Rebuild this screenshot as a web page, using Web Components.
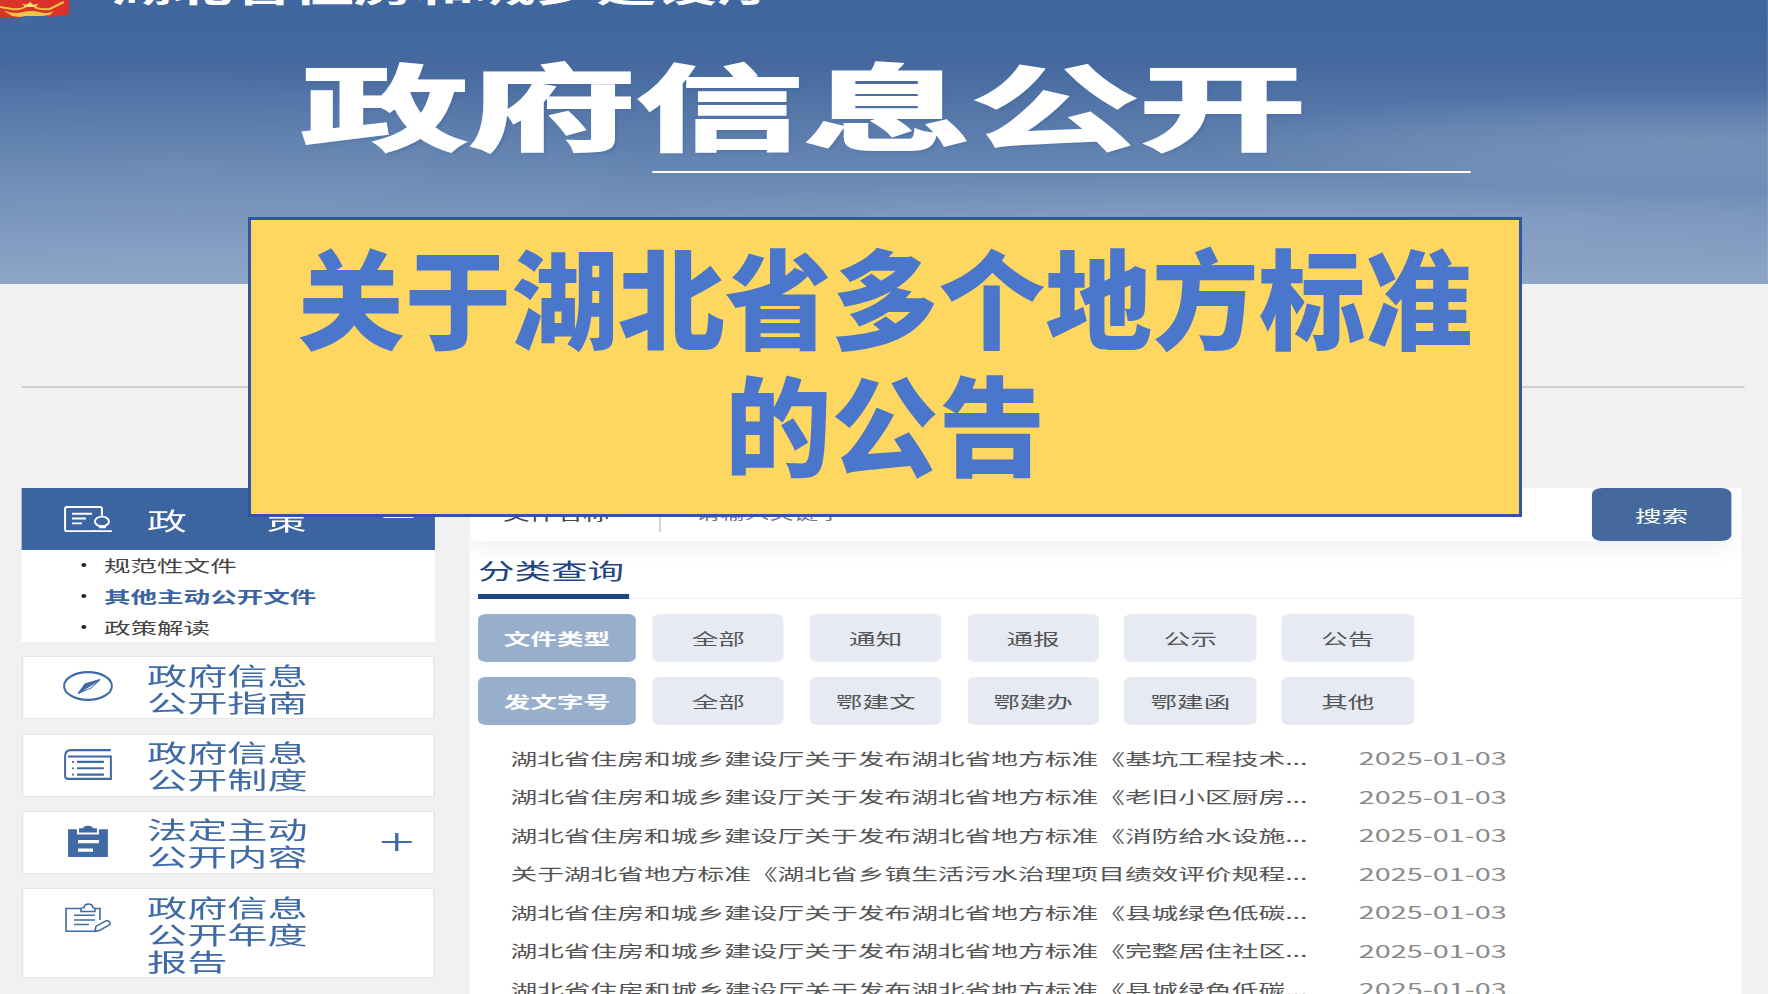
<!DOCTYPE html>
<html lang="zh-CN">
<head>
<meta charset="utf-8">
<title>政府信息公开</title>
<style>
  html, body {
    background: #f1f1f1;
    height: 994px;
    margin: 0;
    overflow: hidden;
    position: relative;
    width: 1768px;
  }
</style>
</head>
<body>
<x-stage>
  <x-banner slot="banner"></x-banner>

  <x-nav-head slot="nav" label="政策">
    <svg slot="icon" viewBox="0 0 50 30" preserveAspectRatio="none" fill="none" stroke="#fff" stroke-width="2">
      <path d="M33 27H4a2 2 0 0 1-2-2V4a2 2 0 0 1 2-2h33a2 2 0 0 1 2 2v7"/>
      <path d="M9 9h20M9 14h14M9 19h10"/>
      <ellipse cx="39" cy="17" rx="7" ry="5"/>
      <path d="M36 23h7M30 27h19"/>
    </svg>
    <x-nav-link>规范性文件</x-nav-link>
    <x-nav-link active>其他主动公开文件</x-nav-link>
    <x-nav-link>政策解读</x-nav-link>
  </x-nav-head>

  <x-nav-item slot="nav" height="63">
    <svg slot="icon" viewBox="0 0 50 30" preserveAspectRatio="none" fill="none" stroke="#3f6aa5" stroke-width="2">
      <ellipse cx="25" cy="15" rx="24" ry="13"/>
      <path d="M37 9 15 22l7-9z" fill="#3f6aa5" stroke-width="1"/>
      <path d="M37 9 15 22l13-5z" fill="#fff" stroke-width="1"/>
    </svg>
    政府信息<br>公开指南
  </x-nav-item>
  <x-nav-item slot="nav" height="63">
    <svg slot="icon" viewBox="0 0 50 30" preserveAspectRatio="none" fill="none" stroke="#3f6aa5" stroke-width="2">
      <path d="M48 2H8C4 2 2 4 2 8v18c0 2 1 3 3 3h43V8H5"/>
      <path d="M14 13h27M14 19h27M14 25h27"/>
      <path d="M9 13h2M9 19h2M9 25h2" stroke-width="1.6"/>
    </svg>
    政府信息<br>公开制度
  </x-nav-item>
  <x-nav-item slot="nav" height="63" plus>
    <svg slot="icon" viewBox="0 0 50 30" preserveAspectRatio="none">
      <path fill="#3f6aa5" d="M5 4h9v5h22V4h9v27H5z"/>
      <path fill="#3f6aa5" d="M16 3h4c1-3 9-3 10 0h4v4H16z"/>
      <path fill="#fff" d="M15 14h21v3H15zM15 22h15v3H15z"/>
    </svg>
    法定主动<br>公开内容
  </x-nav-item>
  <x-nav-item slot="nav" height="90">
    <svg slot="icon" viewBox="0 0 50 34" preserveAspectRatio="none" fill="none" stroke="#3f6aa5" stroke-width="1.6">
      <path d="M18 7H3v24h31M37 19V7H32"/>
      <path d="M18 7c0-1 2-1 3-1 1-5 8-5 9 0 1 0 2 0 2 1v3H18z"/>
      <path d="M11 14h21M11 19h21M11 24h15"/>
      <path d="M32 31l1-5 10-6c2-1 5 2 4 4l-10 6z"/>
    </svg>
    政府信息<br>公开年度<br>报告
  </x-nav-item>

  <x-search-bar slot="main"></x-search-bar>
  <x-tab-title slot="main">分类查询</x-tab-title>
  <x-filter-row slot="main" label="文件类型" items="全部,通知,通报,公示,公告"></x-filter-row>
  <x-filter-row slot="main" label="发文字号" items="全部,鄂建文,鄂建办,鄂建函,其他"></x-filter-row>
  <x-doc-list slot="main">
    <x-doc-row date="2025-01-03">湖北省住房和城乡建设厅关于发布湖北省地方标准《基坑工程技术...</x-doc-row>
    <x-doc-row date="2025-01-03">湖北省住房和城乡建设厅关于发布湖北省地方标准《老旧小区厨房...</x-doc-row>
    <x-doc-row date="2025-01-03">湖北省住房和城乡建设厅关于发布湖北省地方标准《消防给水设施...</x-doc-row>
    <x-doc-row date="2025-01-03">关于湖北省地方标准《湖北省乡镇生活污水治理项目绩效评价规程...</x-doc-row>
    <x-doc-row date="2025-01-03">湖北省住房和城乡建设厅关于发布湖北省地方标准《县城绿色低碳...</x-doc-row>
    <x-doc-row date="2025-01-03">湖北省住房和城乡建设厅关于发布湖北省地方标准《完整居住社区...</x-doc-row>
    <x-doc-row date="2025-01-03">湖北省住房和城乡建设厅关于发布湖北省地方标准《县城绿色低碳...</x-doc-row>
  </x-doc-list>
</x-stage>
<x-headline>关于湖北省多个地方标准<br>的公告</x-headline>

<script>
const FONT = `'Noto Sans CJK SC', 'Noto Sans', sans-serif`;

// Small helper, every element is just a shadow root with some html
class Base extends HTMLElement {
  constructor( html ) {
    super();
    this.attachShadow( {mode: 'open'} );
    this.shadowRoot.innerHTML = html;
  }
}

// The reference is a page stretched sideways, so the whole page is laid out
// at its narrow width and widened here
class XStage extends Base {
  constructor() {
    super( `
      <style>
        :host {
          display: block;
          font-family: ${FONT};
          height: 994px;
          transform: scaleX( 1.66 );
          transform-origin: 0 0;
          width: 1065px;
        }
        .rule {
          background: #cfcfcf;
          height: 2px;
          margin: 102px 14px 0 13px;
        }
        .content {
          display: grid;
          column-gap: 21.4px;
          grid-template-columns: 248.6px 766px;
          margin: 100px 0 0 13px;
        }
        .nav {
          display: flex;
          flex-direction: column;
          gap: 14.3px;
        }
        .main {
          background: #fff;
          height: 506px;
          overflow: hidden;
        }
      </style>
      <slot name="banner"></slot>
      <div class="rule"></div>
      <div class="content">
        <div class="nav"><slot name="nav"></slot></div>
        <div class="main"><slot name="main"></slot></div>
      </div>
    ` );
  }
}

class XBanner extends Base {
  constructor() {
    super( `
      <style>
        :host {
          background:
            radial-gradient( 300px 50px at 96% 50%, #ffffff24 0, #ffffff12 60%, transparent 100% ),
            radial-gradient( 420px 46px at 74% 78%, #ffffff18 0, transparent 100% ),
            radial-gradient( 300px 120px at 10% 60%, #ffffff0c 0, transparent 100% ),
            linear-gradient( 180deg, #3f669e 0, #45699f 22%, #6787b3 60%, #8fa7c8 100% );
          display: block;
          height: 284px;
          overflow: hidden;
        }
        .top {
          align-items: flex-start;
          display: flex;
          height: 18px;
        }
        .emblem {
          display: block;
          flex: none;
          height: 18px;
          width: 42px;
        }
        .org {
          color: #fff;
          font-size: 36.5px;
          font-weight: 700;
          line-height: 36px;
          margin: -31px 0 0 25px;
          white-space: nowrap;
        }
        h1 {
          -webkit-text-stroke: 2.4px #fff;
          color: #fff;
          font-size: 101px;
          font-weight: 700;
          line-height: 118px;
          margin: 26px 0 0 181px;
          text-shadow: 2px 2px 2px #3f669e80;
          transform: scaleY( .92 );
          transform-origin: 0 50%;
          white-space: nowrap;
        }
        .line {
          background: #fff;
          height: 2px;
          margin: 9px 0 0 393px;
          width: 493px;
        }
      </style>
      <div class="top">
        <svg class="emblem" viewBox="0 0 70 18" preserveAspectRatio="none">
          <path fill="#d8322a" d="M0 0h70l-1 15-20 2-3-2-22 0-4 3H0z"/>
          <path fill="none" stroke="#f0c444" stroke-width="2" d="M0 7 12 9c8 1 14-1 18-6 4 5 12 7 20 6l14-7"/>
          <path fill="#f0c444" d="M4 11c6 1 9 2 12 2 4 0 9-2 15-2 6 0 11 2 15 2 3 0 6-1 8-2l-4 4-8 1H26l-6 1-8-1z"/>
          <path fill="#f8dc6a" d="M22 3c3 2 6 2 8 0 3 2 6 2 9 0l-3 4h-11z"/>
        </svg>
        <div class="org">湖北省住房和城乡建设厅</div>
      </div>
      <h1>政府信息公开</h1>
      <div class="line"></div>
    ` );
  }
}

class XNavHead extends Base {
  constructor() {
    super( `
      <style>
        :host {
          display: block;
          background: #fff;
        }
        header {
          align-items: center;
          background: #3c64a1;
          color: #fff;
          display: flex;
          height: 62px;
          padding-left: 25px;
          position: relative;
        }
        ::slotted( svg ) {
          height: 29px;
          width: 30px;
        }
        .label {
          display: flex;
          font-size: 24px;
          justify-content: space-between;
          margin-left: 20.6px;
          width: 96px;
        }
        .minus {
          background: #fff;
          height: 1px;
          position: absolute;
          right: 12.5px;
          top: 29px;
          width: 18px;
        }
        ul {
          display: flex;
          flex-direction: column;
          height: 92px;
          justify-content: center;
          margin: 0;
          padding: 0;
        }
      </style>
      <header>
        <slot name="icon"></slot>
        <div class="label"><span></span><span></span></div>
        <div class="minus"></div>
      </header>
      <ul><slot></slot></ul>
    ` );
  }

  connectedCallback() {
    const spans = this.shadowRoot.querySelectorAll( '.label span' );
    const label = this.getAttribute( 'label' );
    spans[0].textContent = label[0];
    spans[1].textContent = label[1];
  }
}

class XNavLink extends Base {
  constructor() {
    super( `
      <style>
        :host {
          align-items: center;
          color: #444;
          display: flex;
          font-size: 16px;
          height: 30.7px;
          padding-left: 36px;
        }
        :host( [active] ) {
          color: #3c64a1;
          font-weight: 700;
        }
        i {
          background: #222;
          border-radius: 50%;
          flex: none;
          height: 4px;
          margin-right: 10.6px;
          width: 3px;
        }
      </style>
      <i></i><slot></slot>
    ` );
  }
}

class XNavItem extends Base {
  constructor() {
    super( `
      <style>
        :host {
          align-items: center;
          background: #fff;
          box-sizing: border-box;
          border: 1px solid #e6e6e6;
          color: #3f6aa5;
          display: flex;
          font-size: 24.2px;
          line-height: 27px;
          padding-left: 24px;
          position: relative;
        }
        ::slotted( svg ) {
          align-self: flex-start;
          flex: none;
          height: 32px;
          margin-top: 13px;
          width: 30px;
        }
        .text {
          margin-left: 20.6px;
        }
        .plus {
          display: none;
          height: 18px;
          position: absolute;
          right: 12.5px;
          top: 21px;
          width: 18px;
        }
        :host( [plus] ) .plus {
          display: block;
        }
        .plus::before, .plus::after {
          background: #3f6aa5;
          content: '';
          position: absolute;
        }
        .plus::before {
          height: 2px;
          left: 0;
          top: 8px;
          width: 18px;
        }
        .plus::after {
          height: 18px;
          left: 8px;
          top: 0;
          width: 2px;
        }
      </style>
      <slot name="icon"></slot>
      <div class="text"><slot></slot></div>
      <div class="plus"></div>
    ` );
  }

  connectedCallback() {
    this.style.height = this.getAttribute( 'height' ) + 'px';
  }
}

class XSearchBar extends Base {
  constructor() {
    super( `
      <style>
        :host {
          align-items: stretch;
          background: #fff;
          border-radius: 6px;
          box-shadow: 0 8px 16px #0000000f;
          display: flex;
          height: 53px;
          position: relative;
          width: 760px;
        }
        .name {
          color: #444;
          font-size: 16px;
          line-height: 50px;
          padding-left: 20px;
          width: 94px;
        }
        .divider {
          background: #ccc;
          height: 27px;
          margin-top: 17px;
          width: 1px;
        }
        .hint {
          color: #777;
          flex: 1;
          font-size: 14.8px;
          line-height: 50px;
          padding-left: 21px;
        }
        button {
          background: #45699c;
          border: 0;
          border-radius: 6px;
          color: #fff;
          font-family: inherit;
          font-size: 16px;
          padding: 0;
          width: 84px;
        }
      </style>
      <div class="name">文件名称</div>
      <div class="divider"></div>
      <div class="hint">请输入关键字</div>
      <button type="button">搜索</button>
    ` );
  }
}

class XTabTitle extends Base {
  constructor() {
    super( `
      <style>
        :host {
          border-bottom: 1px solid #ececec;
          display: block;
          height: 57px;
          padding-left: 5px;
        }
        span {
          border-bottom: 5px solid #1c4585;
          box-sizing: border-box;
          color: #1f4482;
          display: inline-block;
          font-size: 22px;
          height: 58px;
          line-height: 50px;
          padding-top: 3px;
          width: 91px;
        }
      </style>
      <span><slot></slot></span>
    ` );
  }
}

class XFilterRow extends Base {
  constructor() {
    super( `
      <style>
        :host {
          display: flex;
          font-size: 16px;
          margin: 15px 0 0 5px;
        }
        div {
          align-items: center;
          background: #e8eaf3;
          border-radius: 5px;
          color: #555;
          display: flex;
          height: 48px;
          justify-content: center;
          margin-left: 15.3px;
          width: 79.5px;
        }
        div.head {
          background: #98aecd;
          color: #fff;
          font-weight: 700;
          margin-left: 0;
          margin-right: -5.3px;
          width: 95px;
        }
      </style>
    ` );
  }

  connectedCallback() {
    const head = document.createElement( 'div' );
    head.className = 'head';
    head.textContent = this.getAttribute( 'label' );
    this.shadowRoot.appendChild( head );

    this.getAttribute( 'items' ).split( ',' ).forEach( ( item ) => {
      const div = document.createElement( 'div' );
      div.textContent = item;
      this.shadowRoot.appendChild( div );
    } );
  }
}

class XDocList extends Base {
  constructor() {
    super( `
      <style>
        :host {
          display: block;
          margin: 13.5px 0 0 24.5px;
        }
      </style>
      <slot></slot>
    ` );
  }
}

class XDocRow extends Base {
  constructor() {
    super( `
      <style>
        :host {
          align-items: center;
          display: grid;
          grid-template-columns: 511px auto;
          height: 38.5px;
        }
        .title {
          color: #555;
          font-size: 16.1px;
          white-space: nowrap;
        }
        .date {
          color: #8a8a8a;
          font-size: 17.4px;
        }
      </style>
      <div class="title"><slot></slot></div>
      <div class="date"></div>
    ` );
  }

  connectedCallback() {
    this.shadowRoot.querySelector( '.date' ).textContent = this.getAttribute( 'date' );
  }
}

// Pasted over the stretched page and not stretched itself
class XHeadline extends Base {
  constructor() {
    super( `
      <style>
        :host {
          background: #fed760;
          border: 3px solid #2f55a4;
          box-sizing: border-box;
          color: #4a76cc;
          display: block;
          font-family: ${FONT};
          font-size: 106.8px;
          font-weight: 900;
          height: 300px;
          left: 248px;
          line-height: 126px;
          padding-top: 11px;
          position: absolute;
          text-align: center;
          top: 217px;
          width: 1274px;
        }
        div {
          transform: scaleY( 1.01 );
          transform-origin: 50% 0;
        }
      </style>
      <div><slot></slot></div>
    ` );
  }
}

customElements.define( 'x-stage', XStage );
customElements.define( 'x-banner', XBanner );
customElements.define( 'x-nav-head', XNavHead );
customElements.define( 'x-nav-link', XNavLink );
customElements.define( 'x-nav-item', XNavItem );
customElements.define( 'x-search-bar', XSearchBar );
customElements.define( 'x-tab-title', XTabTitle );
customElements.define( 'x-filter-row', XFilterRow );
customElements.define( 'x-doc-list', XDocList );
customElements.define( 'x-doc-row', XDocRow );
customElements.define( 'x-headline', XHeadline );
</script>
</body>
</html>
